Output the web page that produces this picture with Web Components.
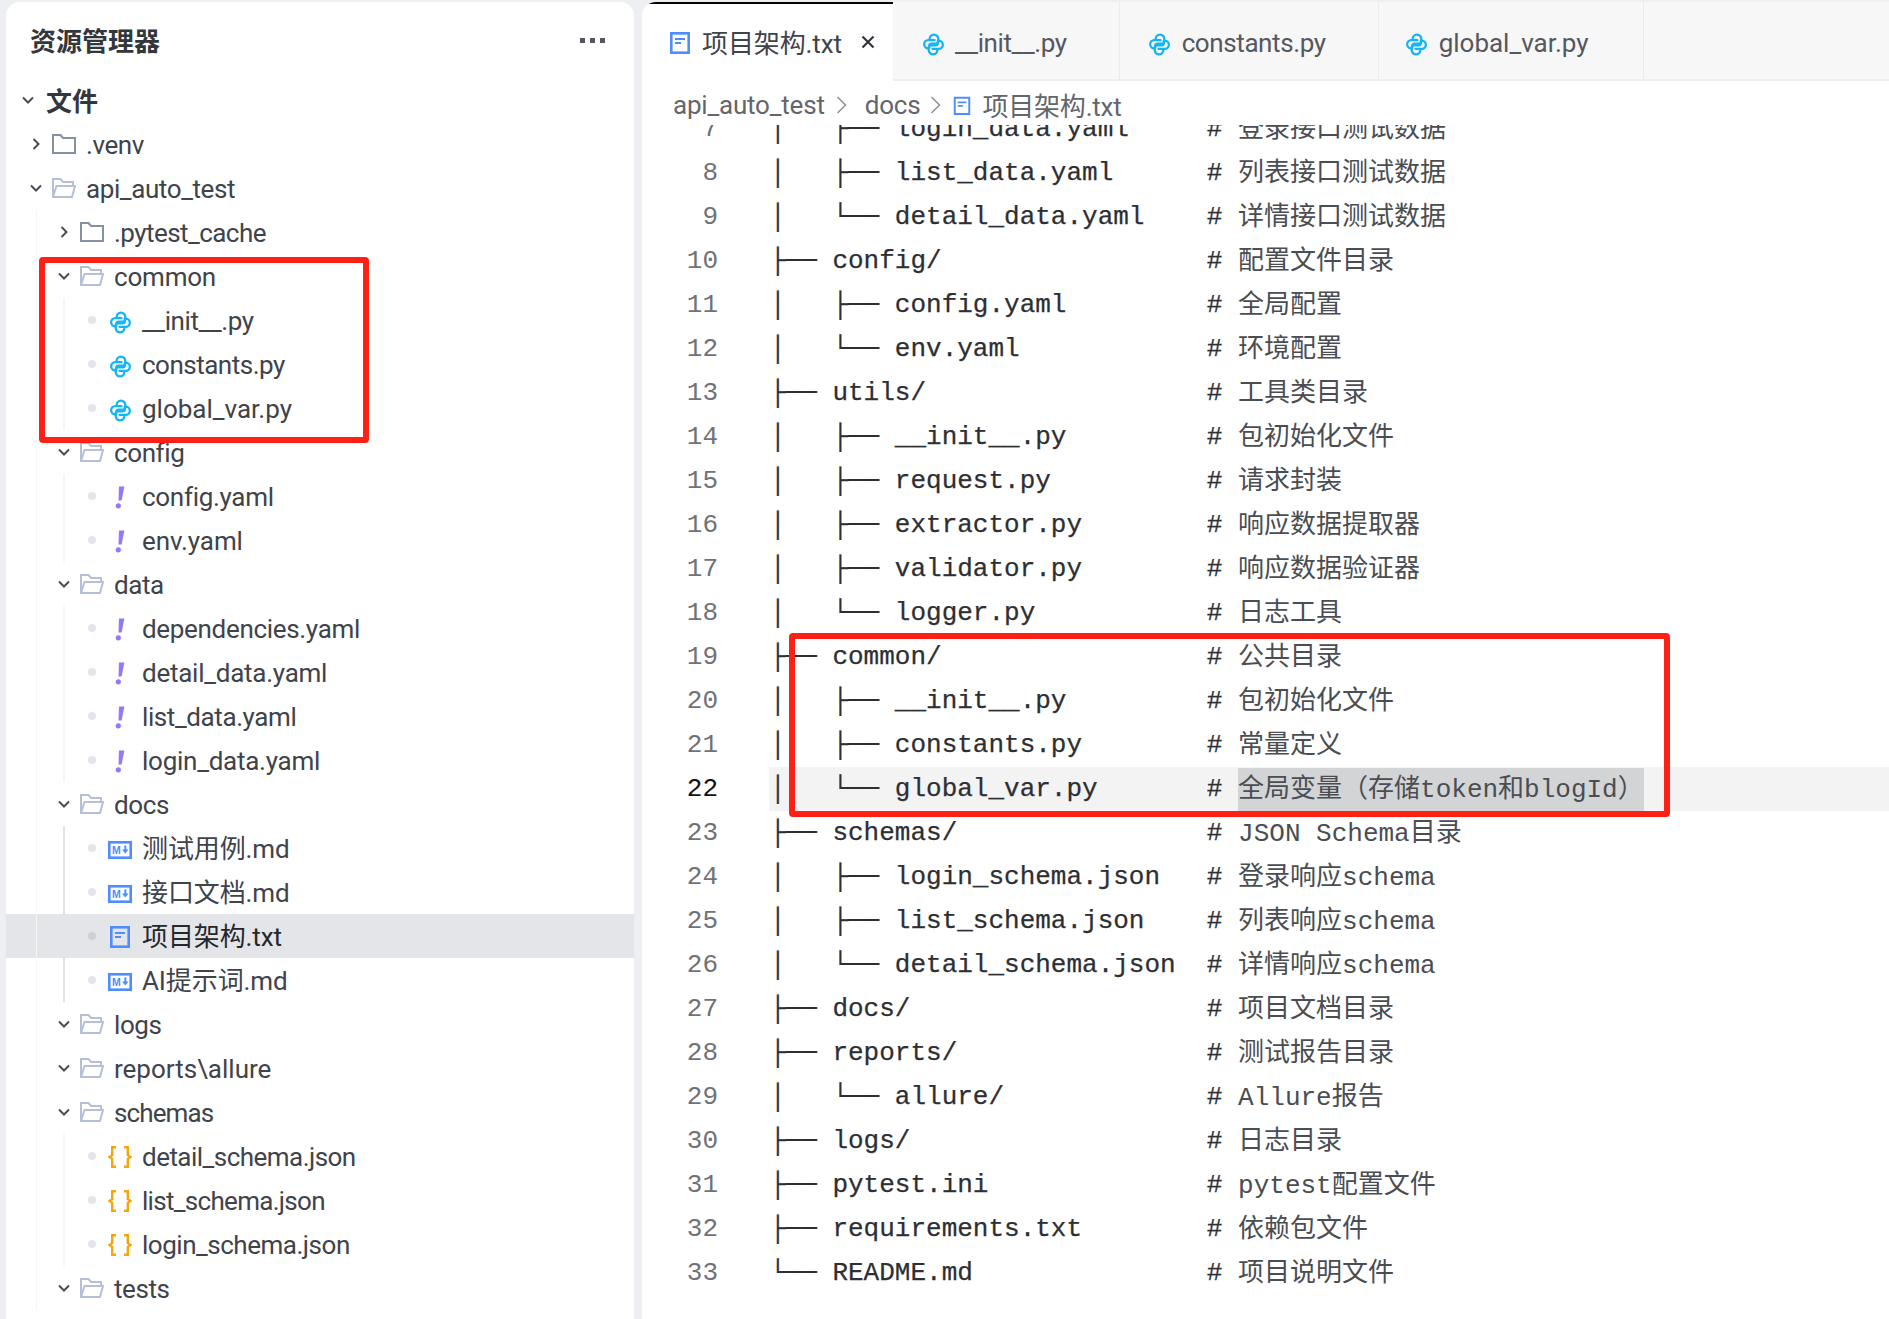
<!DOCTYPE html>
<html lang="zh-CN">
<head>
<meta charset="utf-8">
<title>项目架构.txt</title>
<style>
    html, body { margin: 0; padding: 0; background: #edeff3; }
    body { font-family: Roboto, "Noto Sans CJK SC", sans-serif; }
</style>
</head>
<body>
<app-shell>
    <file-explorer slot="side">
        <tree-row level="0" icon="folder" collapsed>.venv</tree-row>
        <tree-row level="0" icon="folder-open">api_auto_test</tree-row>
        <tree-row level="1" icon="folder" collapsed style="letter-spacing:-.55px">.pytest_cache</tree-row>
        <tree-row level="1" icon="folder-open" style="letter-spacing:-.2px">common</tree-row>
        <tree-row level="2" icon="py">__init__.py</tree-row>
        <tree-row level="2" icon="py" style="letter-spacing:-.5px">constants.py</tree-row>
        <tree-row level="2" icon="py" style="letter-spacing:0">global_var.py</tree-row>
        <tree-row level="1" icon="folder-open">config</tree-row>
        <tree-row level="2" icon="yaml" style="letter-spacing:-.3px">config.yaml</tree-row>
        <tree-row level="2" icon="yaml" style="letter-spacing:-.1px">env.yaml</tree-row>
        <tree-row level="1" icon="folder-open">data</tree-row>
        <tree-row level="2" icon="yaml" style="letter-spacing:-.32px">dependencies.yaml</tree-row>
        <tree-row level="2" icon="yaml" style="letter-spacing:-.25px">detail_data.yaml</tree-row>
        <tree-row level="2" icon="yaml">list_data.yaml</tree-row>
        <tree-row level="2" icon="yaml" style="letter-spacing:-.25px">login_data.yaml</tree-row>
        <tree-row level="1" icon="folder-open">docs</tree-row>
        <tree-row level="2" icon="md" strong-guide wide>测试用例.md</tree-row>
        <tree-row level="2" icon="md" strong-guide wide>接口文档.md</tree-row>
        <tree-row level="2" icon="txt" strong-guide wide selected>项目架构.txt</tree-row>
        <tree-row level="2" icon="md" strong-guide wide>AI提示词.md</tree-row>
        <tree-row level="1" icon="folder-open">logs</tree-row>
        <tree-row level="1" icon="folder-open" style="letter-spacing:0">reports<span class="sep">\</span>allure</tree-row>
        <tree-row level="1" icon="folder-open" style="letter-spacing:-.9px">schemas</tree-row>
        <tree-row level="2" icon="json" style="letter-spacing:-.53px">detail_schema.json</tree-row>
        <tree-row level="2" icon="json" style="letter-spacing:-.7px">list_schema.json</tree-row>
        <tree-row level="2" icon="json" style="letter-spacing:-.48px">login_schema.json</tree-row>
        <tree-row level="1" icon="folder-open">tests</tree-row>
    </file-explorer>

    <editor-pane slot="main">
        <editor-tab slot="tabs" icon="txt" active>项目架构.txt</editor-tab>
        <editor-tab slot="tabs" icon="py">__init__.py</editor-tab>
        <editor-tab slot="tabs" icon="py">constants.py</editor-tab>
        <editor-tab slot="tabs" icon="py" style="letter-spacing:0;padding-left:26px;padding-right:54px">global_var.py</editor-tab>
        <code-view slot="code"></code-view>
    </editor-pane>

    <mark-box style="left:39px;top:257px;width:330px;height:186px"></mark-box>
    <mark-box style="left:789px;top:633px;width:881px;height:184px"></mark-box>
</app-shell>

<script>
    const SNAKE = 'M13 7.500H6.500a4.250 4.250 0 0 0 0 8.500H7.500v-2.500A2.500 2.500 0 0 1 10 11h4.500A2.500 2.500 0 0 0 17 8.500V6.200a4.500 4.500 0 0 0-9 0V7.500';

    const ICONS = {
        folder: `<svg width="24" height="20" viewBox="0 0 24 20" fill="none"><path d="M1 19V1h7.500l2.500 3h12v15z" stroke="#8791a6" stroke-width="2"/></svg>`,
        'folder-open': `<svg width="24" height="20" viewBox="0 0 24 20" fill="none" stroke="#b5c0d8" stroke-width="2"><path d="M1 19V1h7.500l2.500 3h10v4"/><path d="M1 19l3.500-11H23l-3 11z"/></svg>`,
        py: `<svg width="23" height="23" viewBox="0 0 24 24" fill="none" stroke="#12b5f5" stroke-width="2.400" stroke-linecap="round" stroke-linejoin="round" style="transform:translateY(2px)"><path d="${SNAKE}"/><path d="${SNAKE}" transform="rotate(180 12 12)"/></svg>`,
        yaml: `<svg width="24" height="24" viewBox="0 0 24 24" style="transform:translateY(1px)"><path d="M11 1.500h5.400L13.600 15.500H10.500z" fill="#9577f7"/><circle cx="10.300" cy="20.800" r="2.600" fill="#9577f7"/></svg>`,
        md: `<svg width="24" height="18" viewBox="0 0 24 18" style="transform:translateY(2px)"><rect x="1.300" y="1.300" width="21.400" height="15.400" fill="none" stroke="#4d8dff" stroke-width="2.600"/><text x="4" y="13" font-family="Liberation Sans, sans-serif" font-size="10.500" font-weight="700" fill="#4d8dff">M</text><path d="M17.300 4.500v4.500" stroke="#4d8dff" stroke-width="2"/><path d="M14 8.500h6.600l-3.300 4z" fill="#4d8dff"/></svg>`,
        txt: `<svg width="20" height="22" viewBox="0 0 20 22" fill="none" style="transform:translateY(1px)"><rect x="1.300" y="1.300" width="17.400" height="19.400" stroke="#4d8dff" stroke-width="2.600"/><path d="M5 7h10M5 11h6" stroke="#4d8dff" stroke-width="2"/></svg>`,
        json: `<svg width="24" height="22" viewBox="0 0 24 22" fill="none" stroke="#f5a60d" stroke-width="2.400" style="transform:translateY(1px)"><path d="M8 1.200H4.200v8L1.500 11l2.700 1.800v8H8"/><path d="M16 1.200h3.800v8l2.700 1.800-2.700 1.800v8H16"/></svg>`
    };

    class FileIcon extends HTMLElement {
        connectedCallback() {
            this.attachShadow({ mode: 'open' });
            this.shadowRoot.innerHTML = `
                <style>
                    :host { display: inline-flex; align-items: center; justify-content: center; flex-shrink: 0; width: 24px; }
                    svg { display: block; }
                </style>
                ${ICONS[this.getAttribute('name')] || ''}
            `;
        }
    }

    class AppShell extends HTMLElement {
        constructor() {
            super();
            this.attachShadow({ mode: 'open' });
            this.shadowRoot.innerHTML = `
                <style>
                    :host {
                        display: block;
                        position: relative;
                        height: 1319px;
                        overflow: hidden;
                    }
                    .layout {
                        display: grid;
                        grid-template-columns: 628px 1fr;
                        gap: 8px;
                        height: 100%;
                        padding: 2px 0 0 6px;
                        box-sizing: border-box;
                    }
                </style>
                <div class="layout">
                    <slot name="side"></slot>
                    <slot name="main"></slot>
                </div>
                <slot></slot>
            `;
        }
    }

    class FileExplorer extends HTMLElement {
        constructor() {
            super();
            this.attachShadow({ mode: 'open' });
            this.shadowRoot.innerHTML = `
                <style>
                    :host {
                        display: block;
                        background: #fff;
                        border-radius: 14px 14px 0 0;
                        overflow: hidden;
                        color: #3f434a;
                    }
                    .header {
                        display: flex;
                        justify-content: space-between;
                        align-items: center;
                        height: 76px;
                        padding: 0 29px 0 24px;
                    }
                    .title {
                        margin-top: -2px;
                        font-size: 26px;
                        font-weight: 700;
                        color: #33363b;
                    }
                    .more { display: flex; gap: 5px; }
                    .more i { width: 5px; height: 5px; background: #54575d; }
                    .section {
                        display: flex;
                        align-items: center;
                        gap: 10px;
                        height: 44px;
                        padding-left: 14px;
                        font-size: 26px;
                        font-weight: 700;
                        color: #33363b;
                    }
                    .section span { margin-top: -2px; }
                    .section svg { width: 16px; }
                    ::slotted(.sep) { color: #a8abb0; font-weight: 300; margin: 0 8px; }
                </style>
                <div class="header">
                    <span class="title">资源管理器</span>
                    <span class="more"><i></i><i></i><i></i></span>
                </div>
                <div class="section">
                    <svg height="16" viewBox="0 0 16 16" fill="none" stroke="#4a4d55" stroke-width="2"><path d="M3 5.500l5 5 5-5"/></svg>
                    <span>文件</span>
                </div>
                <slot></slot>
            `;
        }
    }

    class TreeRow extends HTMLElement {
        connectedCallback() {
            const level = Number(this.getAttribute('level'));
            const icon = this.getAttribute('icon');
            const isFolder = icon.startsWith('folder');
            const collapsed = this.hasAttribute('collapsed');
            const guideColor = this.hasAttribute('strong-guide') ? '#e3e5ea' : '#f5f6f8';

            // indent guides, one per ancestor folder
            const guides = [];
            if (level >= 1) guides.push(`linear-gradient(#f5f6f8, #f5f6f8) 30px 0 / 1px 100% no-repeat`);
            if (level >= 2) guides.push(`linear-gradient(${guideColor}, ${guideColor}) 57px 0 / 2px 100% no-repeat`);

            const chevron = collapsed
                ? `<svg width="16" height="16" viewBox="0 0 16 16" fill="none" stroke="#4a4d55" stroke-width="2"><path d="M5.500 3l5 5-5 5"/></svg>`
                : `<svg width="16" height="16" viewBox="0 0 16 16" fill="none" stroke="#4a4d55" stroke-width="2"><path d="M3 5.500l5 5 5-5"/></svg>`;

            this.attachShadow({ mode: 'open' });
            this.shadowRoot.innerHTML = `
                <style>
                    :host {
                        display: flex;
                        align-items: center;
                        height: 44px;
                        padding-left: ${22 + level * 28}px;
                        font-size: 26px;
                        letter-spacing: -0.4px;
                        white-space: nowrap;
                        background: ${guides.join(', ') || 'none'};
                    }
                    :host([wide]) { letter-spacing: -0.1px; }
                    :host([selected]) {
                        background: ${guides.join(', ')}, #e4e5e9;
                        background-color: #e4e5e9;
                        color: #25272b;
                    }
                    .lead { display: flex; justify-content: center; width: 16px; margin-right: 8px; }
                    .dot { width: 8px; height: 8px; border-radius: 50%; background: #e4e5ea; }
                    :host([selected]) .dot { background: #cdcfd4; }
                    .label { margin-left: 10px; padding-top: 2px; line-height: 42px; }
                </style>
                <span class="lead">${isFolder ? chevron : '<span class="dot"></span>'}</span>
                <file-icon name="${icon}"></file-icon>
                <span class="label"><slot></slot></span>
            `;
        }
    }

    class EditorTab extends HTMLElement {
        connectedCallback() {
            const active = this.hasAttribute('active');
            this.attachShadow({ mode: 'open' });
            this.shadowRoot.innerHTML = `
                <style>
                    :host {
                        display: flex;
                        align-items: center;
                        gap: 10px;
                        box-sizing: border-box;
                        height: 79px;
                        padding: 4px 52px 0 28px;
                        background: #f7f7f8;
                        border-right: 1px solid #e9ebee;
                        border-bottom: 2px solid #eceef1;
                        color: #55585e;
                        font-size: 26px;
                        letter-spacing: -0.4px;
                        white-space: nowrap;
                    }
                    :host([active]) {
                        width: 251px;
                        padding: 0 18px 2px 26px;
                        background: #fff;
                        border-right: 0;
                        border-bottom: 0;
                        border-top: 2px solid #000;
                        color: #3f434a;
                        letter-spacing: -0.1px;
                    }
                    .close { flex-shrink: 0; margin-left: 8px; display: block; }
                </style>
                <file-icon name="${this.getAttribute('icon')}"></file-icon>
                <slot></slot>
                ${active ? `<svg class="close" width="16" height="16" viewBox="0 0 16 16" stroke="#33363b" stroke-width="2.200"><path d="M2.500 2.500l11 11M13.500 2.500l-11 11"/></svg>` : ''}
            `;
        }
    }

    class EditorPane extends HTMLElement {
        constructor() {
            super();
            this.attachShadow({ mode: 'open' });
            this.shadowRoot.innerHTML = `
                <style>
                    :host {
                        display: flex;
                        flex-direction: column;
                        min-width: 0;
                        background: #fff;
                        border-radius: 14px 0 0 0;
                        overflow: hidden;
                    }
                    .tabs {
                        display: flex;
                        height: 79px;
                        flex-shrink: 0;
                        background: #f7f7f8;
                        box-shadow: inset 0 -2px 0 #eceef1;
                    }
                    .crumbs {
                        display: flex;
                        align-items: center;
                        box-sizing: border-box;
                        height: 44px;
                        flex-shrink: 0;
                        padding: 3px 0 0 31px;
                        font-size: 26px;
                        letter-spacing: -0.2px;
                        color: #63666b;
                        white-space: nowrap;
                    }
                    .crumbs svg.chev { margin: 0 17px 0 11px; }
                    .crumbs svg.chev.last { margin: 0 10px 0 10px; }
                    .crumbs file-icon { width: 20px; margin-right: 10px; transform: scale(.85); }
                    .code { flex: 1; min-height: 0; overflow: hidden; }
                </style>
                <div class="tabs"><slot name="tabs"></slot></div>
                <div class="crumbs">
                    <span>api_auto_test</span>
                    <svg class="chev" width="12" height="20" viewBox="0 0 12 20" fill="none" stroke="#8d9095" stroke-width="1.500"><path d="M1.500 2l8 8-8 8"/></svg>
                    <span>docs</span>
                    <svg class="chev last" width="12" height="20" viewBox="0 0 12 20" fill="none" stroke="#8d9095" stroke-width="1.500"><path d="M1.500 2l8 8-8 8"/></svg>
                    <file-icon name="txt"></file-icon>
                    <span>项目架构.txt</span>
                </div>
                <div class="code"><slot name="code"></slot></div>
            `;
        }
    }

    const LINES = [
        [7, '│   ├── login_data.yaml', '登录接口测试数据'],
        [8, '│   ├── list_data.yaml', '列表接口测试数据'],
        [9, '│   └── detail_data.yaml', '详情接口测试数据'],
        [10, '├── config/', '配置文件目录'],
        [11, '│   ├── config.yaml', '全局配置'],
        [12, '│   └── env.yaml', '环境配置'],
        [13, '├── utils/', '工具类目录'],
        [14, '│   ├── __init__.py', '包初始化文件'],
        [15, '│   ├── request.py', '请求封装'],
        [16, '│   ├── extractor.py', '响应数据提取器'],
        [17, '│   ├── validator.py', '响应数据验证器'],
        [18, '│   └── logger.py', '日志工具'],
        [19, '├── common/', '公共目录'],
        [20, '│   ├── __init__.py', '包初始化文件'],
        [21, '│   ├── constants.py', '常量定义'],
        [22, '│   └── global_var.py', '全局变量（存储token和blogId）'],
        [23, '├── schemas/', 'JSON Schema目录'],
        [24, '│   ├── login_schema.json', '登录响应schema'],
        [25, '│   ├── list_schema.json', '列表响应schema'],
        [26, '│   └── detail_schema.json', '详情响应schema'],
        [27, '├── docs/', '项目文档目录'],
        [28, '├── reports/', '测试报告目录'],
        [29, '│   └── allure/', 'Allure报告'],
        [30, '├── logs/', '日志目录'],
        [31, '├── pytest.ini', 'pytest配置文件'],
        [32, '├── requirements.txt', '依赖包文件'],
        [33, '└── README.md', '项目说明文件']
    ];

    class CodeView extends HTMLElement {
        connectedCallback() {
            const rows = LINES.map(([num, tree, comment]) => {
                const current = num === 22;
                const body = `<span class="${current ? 'note sel' : 'note'}">${comment}</span>`;
                return `<div class="line${current ? ' current' : ''}"><span class="num">${num}</span><pre><span class="tree">${tree.padEnd(28, ' ')}# </span>${body}</pre></div>`;
            }).join('');

            this.attachShadow({ mode: 'open' });
            this.shadowRoot.innerHTML = `
                <style>
                    :host {
                        display: block;
                        margin-top: -18px; /* scrolled: line 7 is cut by the breadcrumb */
                        font: 26px "Liberation Mono", "Noto Sans CJK SC", monospace;
                        color: #2d2f33;
                    }
                    .line { display: flex; height: 44px; line-height: 44px; }
                    .num {
                        flex: 0 0 76px;
                        text-align: right;
                        color: #6f7277;
                    }
                    pre {
                        flex: 1;
                        margin: 0 0 0 51px;
                        padding-left: 1px;
                        font: inherit;
                        white-space: pre;
                    }
                    .tree { -webkit-text-stroke: 0.25px #2d2f33; }
                    .note { color: #4a4d52; vertical-align: -1px; }
                    .current pre { background: #f3f3f3; }
                    .current .num { color: #111; }
                    .sel { display: inline-block; height: 44px; background: #d3d4d6; }
                </style>
                ${rows}
            `;
        }
    }

    class MarkBox extends HTMLElement {
        constructor() {
            super();
            this.attachShadow({ mode: 'open' });
            this.shadowRoot.innerHTML = `
                <style>
                    :host {
                        position: absolute;
                        box-sizing: border-box;
                        border: 6px solid #ff2015;
                        border-radius: 4px;
                        pointer-events: none;
                    }
                </style>
            `;
        }
    }

    customElements.define('file-icon', FileIcon);
    customElements.define('app-shell', AppShell);
    customElements.define('file-explorer', FileExplorer);
    customElements.define('tree-row', TreeRow);
    customElements.define('editor-tab', EditorTab);
    customElements.define('editor-pane', EditorPane);
    customElements.define('code-view', CodeView);
    customElements.define('mark-box', MarkBox);
</script>
</body>
</html>
